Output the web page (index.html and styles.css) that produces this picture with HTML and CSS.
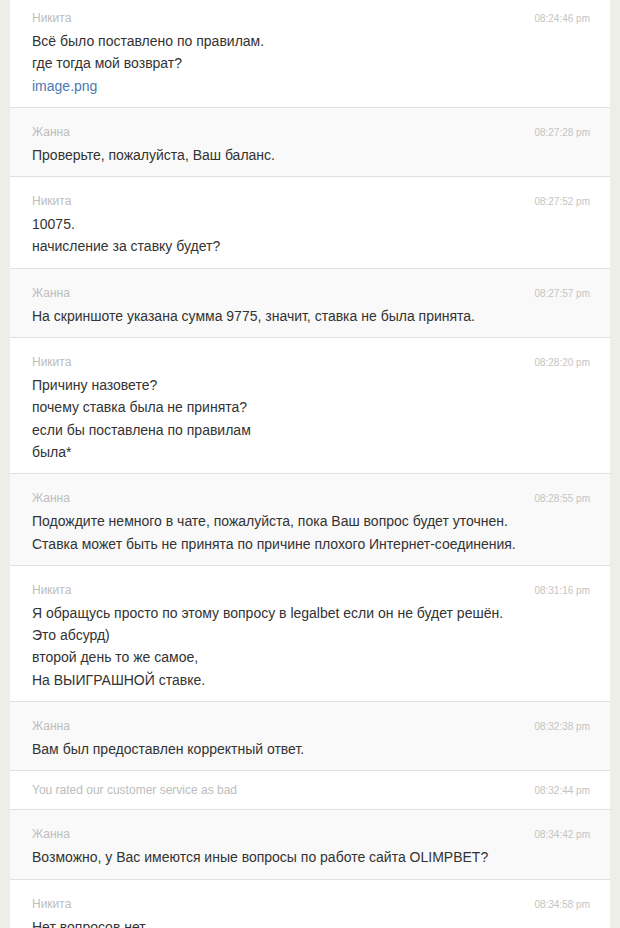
FILE: index.html
```html
<!DOCTYPE html>
<html>
<head>
<meta charset="utf-8">
<link rel="stylesheet" href="styles.css">
</head>
<body>
<div class="chat">
  <div class="msg">
    <div class="head"><span class="name">Никита</span><span class="time">08:24:46 pm</span></div>
    <div class="text">Всё было поставлено по правилам.<br>где тогда мой возврат?<br><a class="link">image.png</a></div>
  </div>
  <div class="msg op">
    <div class="head"><span class="name">Жанна</span><span class="time">08:27:28 pm</span></div>
    <div class="text">Проверьте, пожалуйста, Ваш баланс.</div>
  </div>
  <div class="msg">
    <div class="head"><span class="name">Никита</span><span class="time">08:27:52 pm</span></div>
    <div class="text">10075.<br>начисление за ставку будет?</div>
  </div>
  <div class="msg op">
    <div class="head"><span class="name">Жанна</span><span class="time">08:27:57 pm</span></div>
    <div class="text">На скриншоте указана сумма 9775, значит, ставка не была принята.</div>
  </div>
  <div class="msg">
    <div class="head"><span class="name">Никита</span><span class="time">08:28:20 pm</span></div>
    <div class="text">Причину назовете?<br>почему ставка была не принята?<br>если бы поставлена по правилам<br>была*</div>
  </div>
  <div class="msg op">
    <div class="head"><span class="name">Жанна</span><span class="time">08:28:55 pm</span></div>
    <div class="text">Подождите немного в чате, пожалуйста, пока Ваш вопрос будет уточнен.<br>Ставка может быть не принята по причине плохого Интернет-соединения.</div>
  </div>
  <div class="msg">
    <div class="head"><span class="name">Никита</span><span class="time">08:31:16 pm</span></div>
    <div class="text">Я обращусь просто по этому вопросу в legalbet если он не будет решён.<br>Это абсурд)<br>второй день то же самое,<br>На ВЫИГРАШНОЙ ставке.</div>
  </div>
  <div class="msg op">
    <div class="head"><span class="name">Жанна</span><span class="time">08:32:38 pm</span></div>
    <div class="text">Вам был предоставлен корректный ответ.</div>
  </div>
  <div class="msg sys">
    <div class="head"><span class="name">You rated our customer service as bad</span><span class="time">08:32:44 pm</span></div>
  </div>
  <div class="msg op">
    <div class="head"><span class="name">Жанна</span><span class="time">08:34:42 pm</span></div>
    <div class="text">Возможно, у Вас имеются иные вопросы по работе сайта OLIMPBET?</div>
  </div>
  <div class="msg">
    <div class="head"><span class="name">Никита</span><span class="time">08:34:58 pm</span></div>
    <div class="text">Нет вопросов нет.</div>
  </div>
</div>
</body>
</html>
```
FILE: styles.css
```css
html, body {
  margin: 0;
  padding: 0;
  background: #eeeee9;
  overflow: hidden;
}
body {
  font-family: "Liberation Sans", Arial, sans-serif;
}
.chat {
  margin: -6px 10px 0 10px;
  background: #ffffff;
}
.msg {
  padding: 15px 20px 10px 22px;
  border-bottom: 1px solid #e0e0e0;
  background: #ffffff;
}
.msg.op {
  background: #f9f9f9;
}
.msg.sys {
  padding: 10px 20px 10px 22px;
}
.head {
  display: flex;
  justify-content: space-between;
  align-items: baseline;
  height: 18px;
  line-height: 18px;
  margin-bottom: 3px;
}
.msg.sys .head {
  margin-bottom: 0;
}
.name {
  font-size: 12px;
  color: #bdbdbd;
}
.time {
  font-size: 10px;
  color: #c4c4c4;
}
.text {
  font-size: 14px;
  line-height: 22.3px;
  color: #333333;
}
.link {
  color: #4a7ab5;
  text-decoration: none;
}
```
